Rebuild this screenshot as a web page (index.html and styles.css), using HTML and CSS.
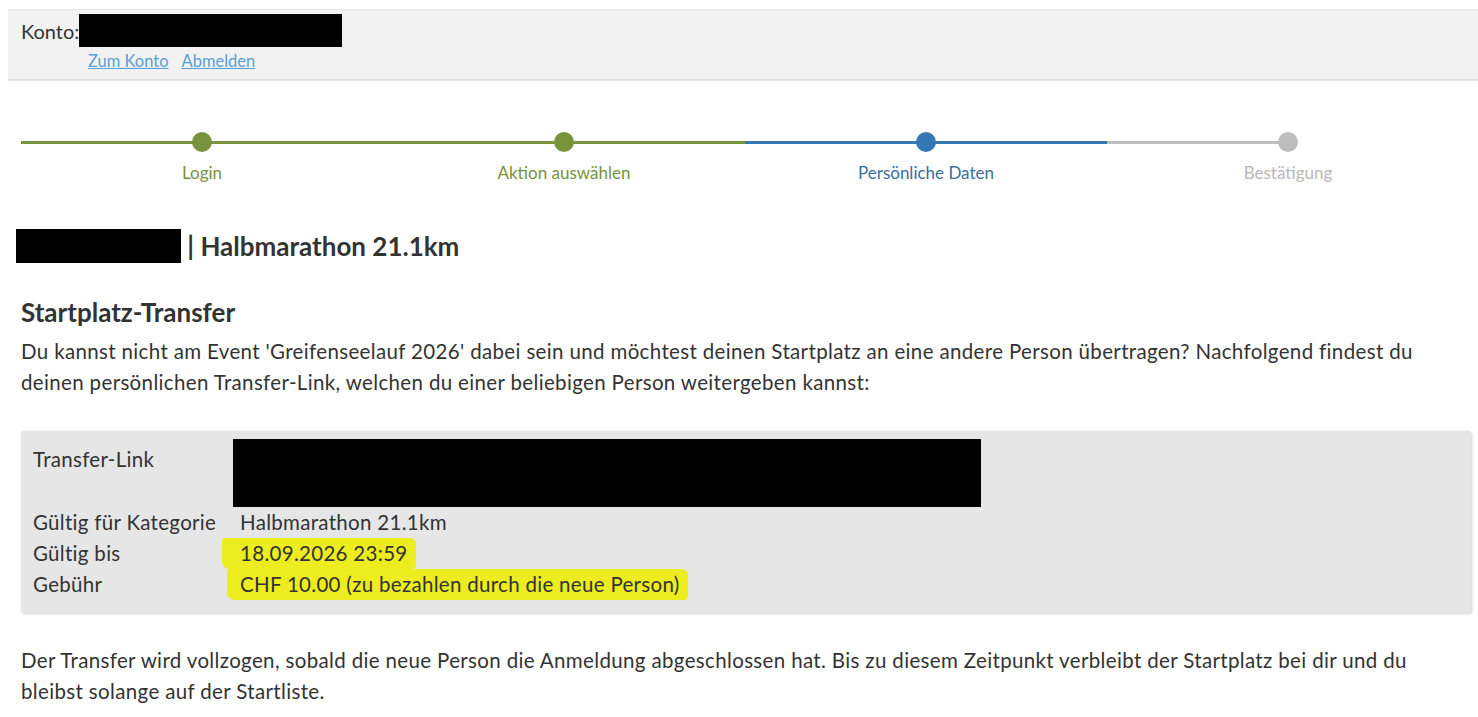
FILE: index.html
```html
<!DOCTYPE html>
<html lang="de">
<head>
<meta charset="utf-8">
<title>Startplatz-Transfer</title>
<link rel="stylesheet" href="styles.css">
</head>
<body>
<header class="account-bar">
  <div class="account-line">
    <span class="account-label">Konto:</span><span class="redact redact-account"></span>
  </div>
  <div class="account-links">
    <a href="#" class="link">Zum Konto</a>
    <a href="#" class="link">Abmelden</a>
  </div>
</header>

<main class="content">
  <ol class="stepper">
    <li class="step done"><span class="dot"></span><span class="step-label">Login</span></li>
    <li class="step done"><span class="dot"></span><span class="step-label">Aktion auswählen</span></li>
    <li class="step current"><span class="dot"></span><span class="step-label">Persönliche Daten</span></li>
    <li class="step todo last"><span class="dot"></span><span class="step-label">Bestätigung</span></li>
  </ol>

  <h1 class="event-title"><span class="redact redact-event"></span> | Halbmarathon 21.1km</h1>

  <h2 class="section-title">Startplatz-Transfer</h2>
  <p class="text">Du kannst nicht am Event 'Greifenseelauf 2026' dabei sein und möchtest deinen Startplatz an eine andere Person übertragen? Nachfolgend findest du deinen persönlichen Transfer-Link, welchen du einer beliebigen Person weitergeben kannst:</p>

  <div class="info-box">
    <div class="info-row">
      <div class="info-label label-link">Transfer-Link</div>
      <div class="info-value"><span class="redact redact-link"></span></div>
    </div>
    <div class="info-row">
      <div class="info-label">Gültig für Kategorie</div>
      <div class="info-value">Halbmarathon 21.1km</div>
    </div>
    <div class="info-row">
      <div class="info-label">Gültig bis</div>
      <div class="info-value"><span class="marker marker-date">18.09.2026 23:59</span></div>
    </div>
    <div class="info-row">
      <div class="info-label">Gebühr</div>
      <div class="info-value"><span class="marker marker-fee">CHF 10.00 (zu bezahlen durch die neue Person)</span></div>
    </div>
  </div>

  <p class="text text-bottom">Der Transfer wird vollzogen, sobald die neue Person die Anmeldung abgeschlossen hat. Bis zu diesem Zeitpunkt verbleibt der Startplatz bei dir und du bleibst solange auf der Startliste.</p>
</main>
</body>
</html>
```

FILE: styles.css
```css
* { box-sizing: border-box; }

html, body { background: #ffffff; }

body {
  margin: 9px 0 0 8px;
  font-family: "Lato", "Liberation Sans", sans-serif;
  color: #333333;
  overflow: hidden;
}

.redact {
  display: inline-block;
  background: #000000;
  vertical-align: top;
}

/* account bar */
.account-bar {
  background: #f2f2f2;
  border-top: 1px solid #e6e6e6;
  border-bottom: 2px solid #e2e2e2;
  height: 72px;
  padding: 4px 0 0 13px;
}

.account-line {
  display: flex;
  align-items: flex-start;
  font-size: 20px;
  line-height: 33px;
}

.account-label { padding-top: 1px; }

.redact-account {
  width: 263px;
  height: 33px;
}

.account-links {
  padding-left: 67px;
  display: flex;
  gap: 13px;
  font-size: 16.5px;
  line-height: 22px;
  margin-top: 2px;
}

.link {
  color: #5a9fd4;
  text-decoration: underline;
}

/* content */
.content {
  padding: 0 7px 0 13px;
}

.stepper {
  list-style: none;
  margin: 50px 0 0 0;
  padding: 0;
  display: grid;
  grid-template-columns: repeat(4, 362px);
}

.step {
  position: relative;
  display: flex;
  flex-direction: column;
  align-items: center;
  height: 62px;
}

.step::before,
.step::after {
  content: "";
  position: absolute;
  top: 10px;
  height: 3px;
  width: 50%;
}
.step::before { left: 0; }
.step::after { right: 0; }

.dot {
  position: relative;
  z-index: 1;
  width: 20px;
  height: 20px;
  border-radius: 50%;
  margin-top: 1px;
}

.step-label {
  margin-top: 11px;
  font-size: 17px;
  line-height: 20px;
}

.step.done::before, .step.done::after, .step.done .dot { background: #77933c; }
.step.done .step-label { color: #77933c; }

.step.current::before, .step.current::after, .step.current .dot { background: #3377b5; }
.step.current .step-label { color: #3a6f9e; }

.step.todo::before, .step.todo .dot { background: #bdbdbd; }
.step.todo .step-label { color: #b8b8b8; }
.step.last::after { display: none; }

.event-title {
  margin: 36px 0 0 -5px;
  font-size: 26px;
  font-weight: 700;
  line-height: 34px;
  color: #333333;
}

.redact-event {
  width: 165px;
  height: 34px;
}

.section-title {
  margin: 33px 0 0 0;
  font-size: 26px;
  font-weight: 700;
  line-height: 32px;
  color: #333333;
}

.text {
  margin: 8px 0 0 0;
  max-width: 1420px;
  font-size: 20.5px;
  letter-spacing: 0.35px;
  line-height: 31px;
}

.info-box {
  margin-top: 33px;
  background: #e6e6e6;
  border-radius: 3px;
  box-shadow: 1px 1px 3px rgba(0, 0, 0, 0.18);
  padding: 8px 12px 13px 12px;
}

.info-row {
  display: grid;
  grid-template-columns: 200px 1fr;
  font-size: 20.5px;
  letter-spacing: 0.3px;
  line-height: 31px;
}

.label-link { padding-top: 5px; }

.info-value { padding-left: 7px; }

.redact-link {
  width: 748px;
  height: 68px;
  margin-left: -7px;
}

.marker {
  background: #ecec1e;
  padding: 3px 8px 4px 18px;
  margin-left: -18px;
  border-radius: 3px 6px 4px 8px;
}

.marker-fee {
  padding-left: 13px;
  margin-left: -13px;
}

.text-bottom { margin-top: 32px; }
```
